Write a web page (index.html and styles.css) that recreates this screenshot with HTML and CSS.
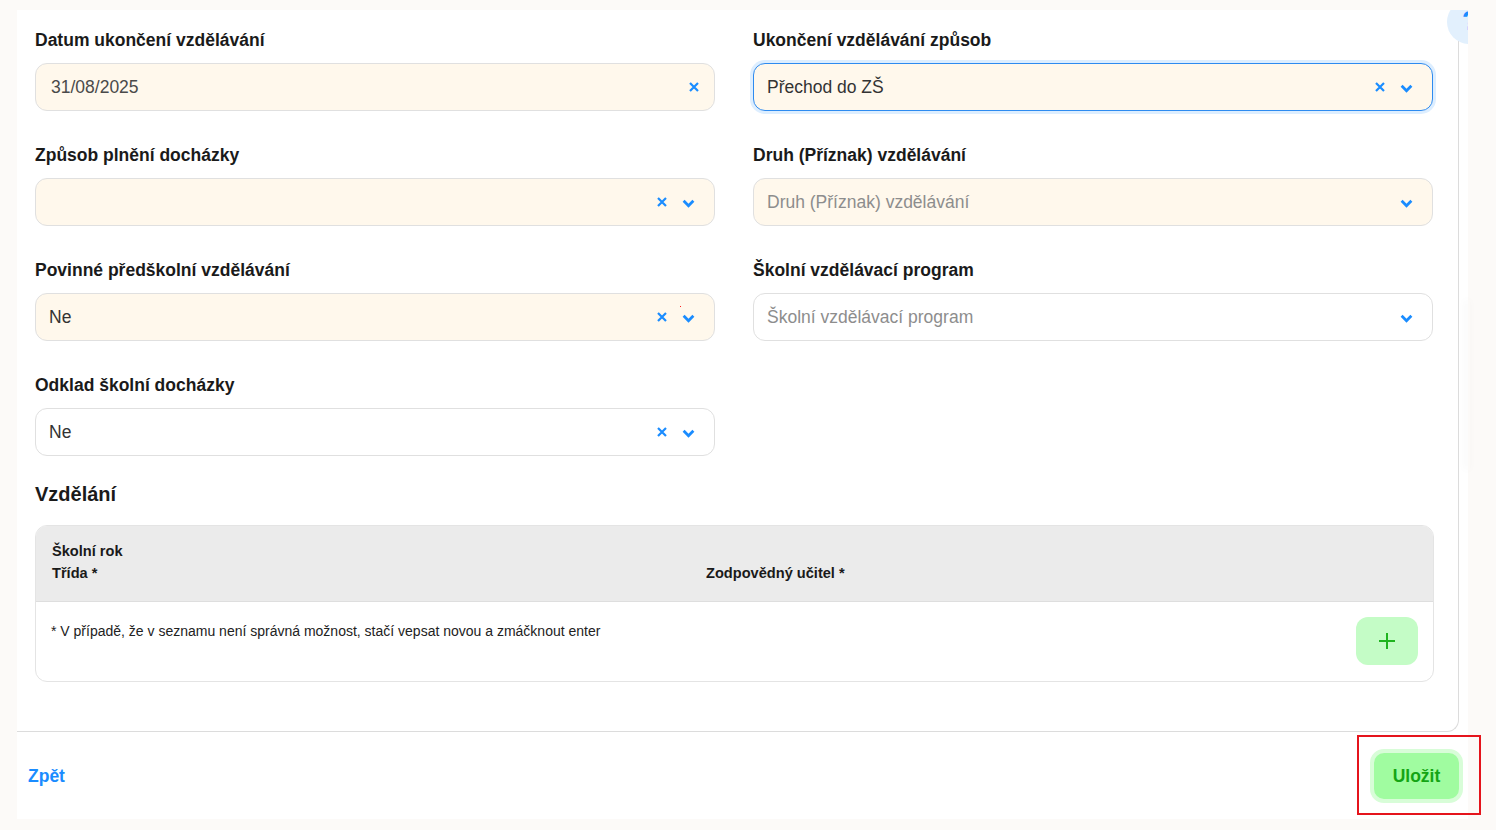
FILE: index.html
```html
<!DOCTYPE html>
<html lang="cs">
<head>
<meta charset="utf-8">
<title>Vzdělávání</title>
<link rel="stylesheet" href="styles.css">
</head>
<body>
<div class="shell">
  <div class="help"><span class="help-glyph">?</span></div>
  <div class="card">
    <div class="grid">
      <div class="field">
        <label class="label">Datum ukončení vzdělávání</label>
        <div class="input filled">
          <span class="value">31/08/2025</span>
          <span class="icons"><svg class="ico-x" viewBox="0 0 10 10"><path d="M1 1L9 9M9 1L1 9"/></svg></span>
        </div>
      </div>
      <div class="field">
        <label class="label">Ukončení vzdělávání způsob</label>
        <div class="input filled focused">
          <span class="value dark">Přechod do ZŠ</span>
          <span class="icons"><svg class="ico-x" viewBox="0 0 10 10"><path d="M1 1L9 9M9 1L1 9"/></svg><svg class="ico-chev" viewBox="0 0 12 8"><path d="M1.5 1.5L6 6L10.5 1.5"/></svg></span>
        </div>
      </div>
      <div class="field">
        <label class="label">Způsob plnění docházky</label>
        <div class="input filled">
          <span class="value"></span>
          <span class="icons"><svg class="ico-x" viewBox="0 0 10 10"><path d="M1 1L9 9M9 1L1 9"/></svg><svg class="ico-chev" viewBox="0 0 12 8"><path d="M1.5 1.5L6 6L10.5 1.5"/></svg></span>
        </div>
      </div>
      <div class="field">
        <label class="label">Druh (Příznak) vzdělávání</label>
        <div class="input filled">
          <span class="value placeholder">Druh (Příznak) vzdělávání</span>
          <span class="icons"><svg class="ico-chev" viewBox="0 0 12 8"><path d="M1.5 1.5L6 6L10.5 1.5"/></svg></span>
        </div>
      </div>
      <div class="field">
        <label class="label">Povinné předškolní vzdělávání</label>
        <div class="input filled">
          <span class="value tight">Ne</span>
          <span class="icons"><svg class="ico-x" viewBox="0 0 10 10"><path d="M1 1L9 9M9 1L1 9"/></svg><svg class="ico-chev" viewBox="0 0 12 8"><path d="M1.5 1.5L6 6L10.5 1.5"/></svg></span>
          <span class="dot"></span>
        </div>
      </div>
      <div class="field">
        <label class="label">Školní vzdělávací program</label>
        <div class="input">
          <span class="value placeholder">Školní vzdělávací program</span>
          <span class="icons"><svg class="ico-chev" viewBox="0 0 12 8"><path d="M1.5 1.5L6 6L10.5 1.5"/></svg></span>
        </div>
      </div>
      <div class="field">
        <label class="label">Odklad školní docházky</label>
        <div class="input">
          <span class="value tight">Ne</span>
          <span class="icons"><svg class="ico-x" viewBox="0 0 10 10"><path d="M1 1L9 9M9 1L1 9"/></svg><svg class="ico-chev" viewBox="0 0 12 8"><path d="M1.5 1.5L6 6L10.5 1.5"/></svg></span>
        </div>
      </div>
    </div>

    <h2 class="section">Vzdělání</h2>

    <div class="table">
      <div class="thead">
        <div class="th-col">
          <div>Školní rok</div>
          <div>Třída *</div>
        </div>
        <div class="th-col">
          <div>&nbsp;</div>
          <div>Zodpovědný učitel *</div>
        </div>
      </div>
      <div class="tbody">
        <div class="note">* V případě, že v seznamu není správná možnost, stačí vepsat novou a zmáčknout enter</div>
        <button class="add" type="button"><svg viewBox="0 0 20 20"><path d="M10 2V18M2 10H18"/></svg></button>
      </div>
    </div>
  </div>

  <div class="footer">
    <a class="back" href="#">Zpět</a>
    <button class="save" type="button">Uložit</button>
  </div>
  <div class="highlight"></div>
</div>
<div class="drawer-shadow"></div>
</body>
</html>
```

FILE: styles.css
```css
* { box-sizing: border-box; }

html, body {
  margin: 0;
  padding: 0;
  background: #fcfaf8;
  font-family: "Liberation Sans", Arial, sans-serif;
  color: #222;
}

body {
  height: 830px;
  overflow: hidden;
  position: relative;
}

.shell {
  position: relative;
  margin: 10px 0 0 17px;
  width: 1451px;
  background: #fff;
}

.help {
  position: absolute;
  top: -10px;
  right: -23px;
  width: 44px;
  height: 44px;
  border-radius: 50%;
  background: #e2f0fd;
  clip-path: inset(10px 23px 0 0);
}

.help-glyph {
  position: absolute;
  left: 15px;
  top: 8px;
  font-size: 27px;
  font-weight: bold;
  color: #1a8cff;
  line-height: 1;
}

.card {
  width: 1442px;
  border-right: 1px solid #dcdcdc;
  border-bottom: 1px solid #dcdcdc;
  border-bottom-right-radius: 12px;
  padding: 20px 24px 49px 18px;
}

.grid {
  display: grid;
  grid-template-columns: 680px 680px;
  column-gap: 38px;
  row-gap: 34px;
}

.label {
  display: block;
  font-size: 17.5px;
  line-height: 20px;
  font-weight: bold;
  color: #1a1a1a;
  margin-bottom: 13px;
}

.input {
  position: relative;
  height: 48px;
  border: 1px solid #e0e0e0;
  border-radius: 12px;
  background: #fff;
  display: flex;
  align-items: center;
  padding: 0 15px 0 15px;
}

.input.filled { background: #fff8ec; }

.input.focused {
  border-color: #2e8bf0;
  box-shadow: 0 0 0 3px #ddeeff;
}

.value {
  flex: 1;
  font-size: 17.5px;
  color: #4a4a4a;
}

.value.tight { margin-left: -2px; color: #333; }
.value.dark { margin-left: -2px; color: #333; }
.value.placeholder { color: #8d8d8d; margin-left: -2px; }

.icons {
  display: flex;
  align-items: center;
  gap: 15px;
}

.ico-x {
  width: 10px;
  height: 10px;
  fill: none;
  stroke: #1a8cff;
  stroke-width: 2.2;
}

.ico-chev {
  width: 13px;
  height: 9px;
  fill: none;
  stroke: #1a8cff;
  stroke-width: 2.6;
  margin-top: 3px;
  margin-right: 4px;
}

.dot {
  position: absolute;
  left: 644px;
  top: 12px;
  width: 1px;
  height: 1px;
  background: #ff2020;
}

.section {
  margin: 26px 0 19px;
  font-size: 20px;
  line-height: 24px;
  font-weight: bold;
  color: #1a1a1a;
}

.table {
  border: 1px solid #e4e4e4;
  border-radius: 12px;
  overflow: hidden;
}

.thead {
  background: #ebebeb;
  border-bottom: 1px solid #dedede;
  display: grid;
  grid-template-columns: 654px 1fr;
  padding: 14px 16px 17px;
  font-size: 14.6px;
  line-height: 22px;
  font-weight: bold;
  color: #1a1a1a;
}

.tbody {
  display: flex;
  justify-content: space-between;
  align-items: flex-start;
  padding: 15px 15px 16px 15px;
}

.note {
  font-size: 14px;
  line-height: 18px;
  color: #222;
  padding-top: 5px;
}

.add {
  width: 62px;
  height: 48px;
  border: none;
  border-radius: 12px;
  background: #c4fcc6;
  display: flex;
  align-items: center;
  justify-content: center;
  padding: 0;
}

.add svg {
  width: 20px;
  height: 20px;
  fill: none;
  stroke: #1fb41f;
  stroke-width: 2;
}

.footer {
  height: 87px;
  display: flex;
  align-items: center;
  justify-content: space-between;
  padding: 1px 5px 0 11px;
}

.back {
  font-size: 17.5px;
  font-weight: bold;
  color: #1a8cff;
  text-decoration: none;
}

.save {
  width: 93px;
  height: 54px;
  border: 4px solid #d8fdd8;
  border-radius: 14px;
  background: #a0fca0;
  color: #14a514;
  font-family: "Liberation Sans", Arial, sans-serif;
  font-size: 17.5px;
  font-weight: bold;
  padding: 0;
}

.highlight {
  position: absolute;
  left: 1340px;
  top: 725px;
  width: 124px;
  height: 80px;
  border: 2px solid #e5141c;
  pointer-events: none;
}

.drawer-shadow {
  position: absolute;
  left: 1468px;
  top: 300px;
  width: 2px;
  height: 170px;
  box-shadow: -2px 0 8px rgba(0,0,0,0.08);
}
```
